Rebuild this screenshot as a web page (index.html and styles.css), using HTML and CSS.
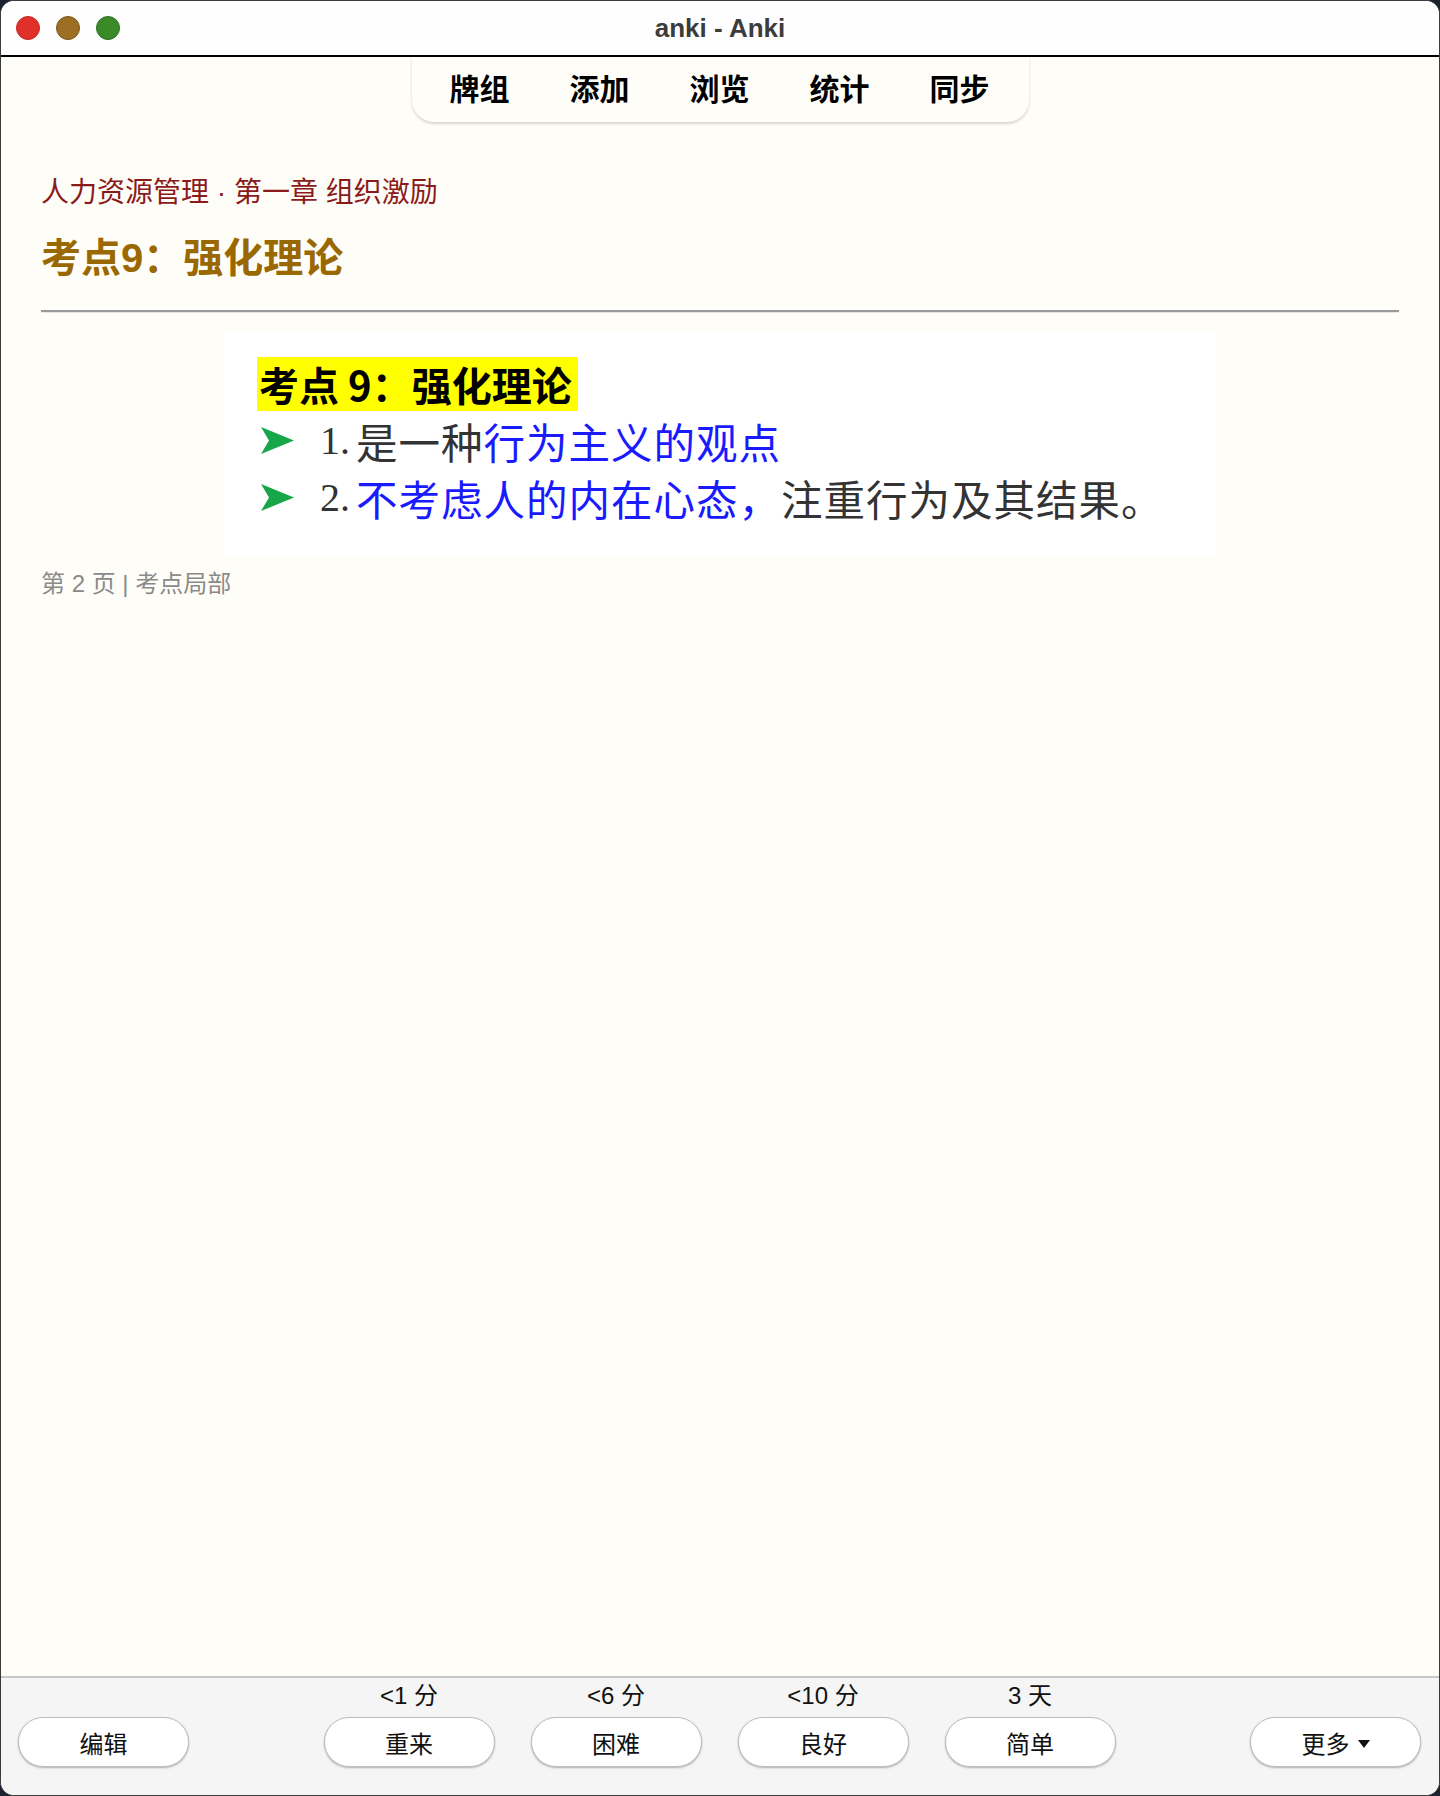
FILE: index.html
```html
<!DOCTYPE html>
<html lang="zh-CN">
<head>
<meta charset="utf-8">
<title>anki - Anki</title>
<link rel="stylesheet" href="styles.css">
</head>
<body>
<div class="window">
  <header class="titlebar">
    <div class="lights">
      <span class="light red"></span>
      <span class="light yellow"></span>
      <span class="light green"></span>
    </div>
    <div class="wtitle">anki - Anki</div>
  </header>

  <main class="main">
    <nav class="topnav">
      <a class="navitem">牌组</a>
      <a class="navitem">添加</a>
      <a class="navitem">浏览</a>
      <a class="navitem">统计</a>
      <a class="navitem">同步</a>
    </nav>

    <section class="card">
      <div class="crumb">人力资源管理 · 第一章 组织激励</div>
      <h1 class="ctitle">考点9：强化理论</h1>
      <hr class="rule">
      <div class="slide">
        <div class="srow"><span class="hl">考点 9：强化理论</span></div>
        <div class="srow">
          <svg class="arrow" viewBox="0 0 33 27"><polygon points="0,0 33,13.5 0,27 8,13.5" fill="#17a64a"/></svg>
          <span class="num">1.</span><span class="gray">是一种</span><span class="blue">行为主义的观点</span>
        </div>
        <div class="srow">
          <svg class="arrow" viewBox="0 0 33 27"><polygon points="0,0 33,13.5 0,27 8,13.5" fill="#17a64a"/></svg>
          <span class="num">2.</span><span class="blue">不考虑人的内在心态，</span><span class="gray">注重行为及其结果。</span>
        </div>
      </div>
      <div class="source">第 2 页 | 考点局部</div>
    </section>
  </main>

  <footer class="bottombar">
    <div class="bcol"><button class="btn">编辑</button></div>
    <div class="answers">
      <div class="bcol"><div class="ivl">&lt;1 分</div><button class="btn">重来</button></div>
      <div class="bcol"><div class="ivl">&lt;6 分</div><button class="btn">困难</button></div>
      <div class="bcol"><div class="ivl">&lt;10 分</div><button class="btn">良好</button></div>
      <div class="bcol"><div class="ivl">3 天</div><button class="btn">简单</button></div>
    </div>
    <div class="bcol"><button class="btn">更多<span class="caret"></span></button></div>
  </footer>
</div>
</body>
</html>
```

FILE: styles.css
```css
html, body {
  margin: 0;
  padding: 0;
  background: #1c2230;
}
body {
  font-family: "Liberation Sans", "Noto Sans CJK SC", sans-serif;
}
.window {
  width: 1440px;
  height: 1796px;
  box-sizing: border-box;
  border-radius: 14px;
  overflow: hidden;
  background: #fffdf8;
  display: flex;
  flex-direction: column;
  border: 1px solid #3a3a3a;
}
.titlebar {
  height: 54px;
  flex: none;
  background: #fefefe;
  border-bottom: 2px solid #000;
  display: flex;
  align-items: center;
  position: relative;
}
.lights {
  display: flex;
  gap: 16px;
  padding-left: 15px;
}
.light {
  width: 24px;
  height: 24px;
  border-radius: 50%;
  box-sizing: border-box;
}
.red { background: #e0302a; border: 1px solid #c22a22; }
.yellow { background: #9c6f24; border: 1px solid #7c561a; }
.green { background: #3b8a28; border: 1px solid #2f6f20; }
.wtitle {
  position: absolute;
  left: 0;
  right: 0;
  text-align: center;
  font-size: 26px;
  font-weight: 700;
  color: #3c3c3c;
  pointer-events: none;
}
.main {
  flex: 1;
  display: flex;
  flex-direction: column;
  align-items: stretch;
}
.topnav {
  align-self: center;
  display: flex;
  gap: 60px;
  padding: 0 39px 5px 38px;
  height: 65px;
  box-sizing: border-box;
  align-items: center;
  background: #fffdf8;
  border-radius: 0 0 22px 22px;
  box-shadow: 0 2px 3px rgba(0,0,0,0.16);
  font-family: "Noto Sans CJK SC", sans-serif;
}
.navitem {
  font-size: 30px;
  font-weight: 700;
  color: #000;
  line-height: 1;
}
.card {
  padding: 53px 40px 0 40px;
}
.crumb {
  font-family: "Liberation Sans", "Noto Sans CJK SC", sans-serif;
  font-size: 28px;
  line-height: 36px;
  color: #8b1a1a;
}
.ctitle {
  margin: 23px 0 0 0;
  font-family: "Liberation Sans", "Noto Sans CJK SC", sans-serif;
  font-size: 40px;
  line-height: 48px;
  font-weight: 700;
  color: #9a6800;
}
.rule {
  margin: 28px 0 0 0;
  border: 0;
  border-top: 2px solid #9a9a9a;
  border-bottom: 1px solid #e6e6e6;
  height: 0;
}
.slide {
  width: 992px;
  box-sizing: border-box;
  margin: 20px auto 0 auto;
  background: #fff;
  padding: 22px 20px 28px 33px;
  font-family: "Noto Sans CJK SC", sans-serif;
}
.srow {
  height: 57px;
  display: flex;
  align-items: center;
  font-size: 41.5px;
  letter-spacing: 1px;
  white-space: nowrap;
}
.hl {
  background: #ffff00;
  color: #000;
  font-weight: 700;
  font-size: 40px;
  letter-spacing: 0;
  line-height: 54px;
  padding: 0 6px 0 2px;
}
.arrow {
  width: 33px;
  height: 27px;
  margin: 0 26px 0 4px;
  flex: none;
}
.num {
  font-family: "Liberation Serif", serif;
  color: #333;
  font-size: 40px;
  letter-spacing: 0;
  margin-right: 6px;
}
.gray { color: #333; }
.blue { color: #1a1aff; }
.source {
  margin-top: 15px;
  font-family: "Liberation Sans", "Noto Sans CJK SC", sans-serif;
  font-size: 24px;
  line-height: 30px;
  color: #8a8a8a;
}
.bottombar {
  flex: none;
  height: 119px;
  box-sizing: border-box;
  background: #f5f5f5;
  border-top: 2px solid #c8c8c8;
  padding: 0 18px 28px 17px;
  display: flex;
  justify-content: space-between;
  align-items: flex-end;
  font-family: "Liberation Sans", "Noto Sans CJK SC", sans-serif;
}
.answers {
  display: flex;
  gap: 36px;
}
.bcol {
  display: flex;
  flex-direction: column;
  align-items: center;
}
.ivl {
  font-size: 24px;
  line-height: 28px;
  color: #111;
  margin-bottom: 7px;
}
.btn {
  width: 171px;
  height: 50px;
  box-sizing: border-box;
  border: 1px solid #bdbdbd;
  border-radius: 25px;
  background: #fff;
  box-shadow: 0 1px 2px rgba(0,0,0,0.28);
  font-family: "Noto Sans CJK SC", sans-serif;
  font-size: 24px;
  color: #111;
  display: flex;
  align-items: center;
  justify-content: center;
  padding: 0;
}
.caret {
  width: 0;
  height: 0;
  border-left: 6px solid transparent;
  border-right: 6px solid transparent;
  border-top: 8px solid #111;
  margin-left: 8px;
  margin-top: 3px;
}
```
